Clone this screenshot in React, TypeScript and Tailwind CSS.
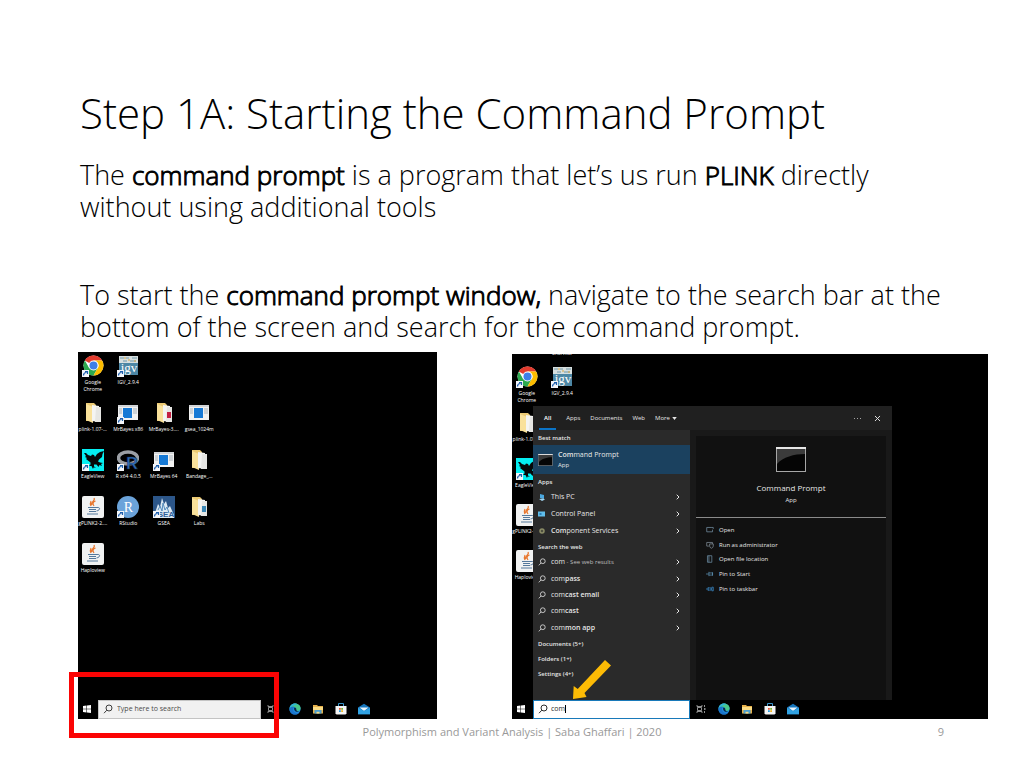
import { ReactNode } from "react";
import { ChevronRight, X } from "lucide-react";

/* ---------- desktop icons ---------- */

function Shortcut() {
  return (
    <g>
      <rect x="0" y="15" width="7" height="7" fill="#f4f6fa" />
      <path d="M1.5 20.5c0-2.500 1-3 3-3M3 16.500h2.500v2.500" stroke="#1d5fae" strokeWidth="1.2" fill="none" />
    </g>
  );
}

function Icon({ children, shortcut }: { children: ReactNode; shortcut?: boolean }) {
  return (
    <svg viewBox="0 0 22 22" className="size-[22px] shrink-0" aria-hidden="true">
      {children}
      {shortcut && <Shortcut />}
    </svg>
  );
}

function ChromeIcon() {
  return (
    <Icon shortcut>
      <circle cx="11.5" cy="10.5" r="10" fill="#fff" />
      <path d="M11.5 10.5 2.84 5.5A10 10 0 0 1 20.16 5.5H11.5z" fill="#e33b2e" />
      <path d="M2.84 5.5A10 10 0 0 0 11.5 20.5l4.33-7.5-8.66 0z" fill="#2da94f" />
      <path d="M20.16 5.5A10 10 0 0 1 11.5 20.5l4.33-7.5a5 5 0 0 0-4.33-7.5z" fill="#fdbd00" />
      <circle cx="11.5" cy="10.5" r="5" fill="#fff" />
      <circle cx="11.5" cy="10.5" r="4" fill="#3f7fe8" />
    </Icon>
  );
}

function IgvIcon() {
  return (
    <Icon shortcut>
      <rect x="2" y="1" width="19" height="19" fill="#4d87a5" />
      <rect x="2" y="1" width="19" height="7" fill="#d7dfdf" />
      <path d="M3 3h4M9 3h3M15 3h5M6 6h4M13 6h6" stroke="#7197a8" strokeWidth="1" />
      <path d="M7 3h2M17 6h2M11 5h2" stroke="#d9a540" strokeWidth="1" />
      <text x="12" y="17" textAnchor="middle" fontSize="13" fontFamily="Liberation Serif, serif" fill="#fff">igv</text>
    </Icon>
  );
}

function FolderIcon({ accent }: { accent?: string }) {
  return (
    <Icon>
      <path d="M4 1h8l2 2v16H4z" fill="#ecca74" />
      <path d="M4 2l7 3v16l-7-3z" fill="#f9e19b" />
      <path d="M10 3l7 1v16l-7-1z" fill="#f4f4f2" />
      <path d="M14 5h5v15h-6z" fill="#e6e6e3" />
      {accent && <rect x="14" y="10" width="4" height="6" fill={accent} />}
    </Icon>
  );
}

function WindowIcon({ shortcut }: { shortcut?: boolean }) {
  return (
    <Icon shortcut={shortcut}>
      <rect x="1" y="3" width="20" height="15" fill="#f2f2f2" />
      <path d="M1 3h20v2H1z" fill="#d2d5d8" />
      <rect x="6" y="6" width="9" height="10" fill="#1679d5" />
      <path d="M2 7h3M2 9h3M2 11h3M16 7h4M16 9h4M16 11h4" stroke="#a9b3bb" strokeWidth="1" />
    </Icon>
  );
}

function EagleIcon() {
  return (
    <Icon shortcut>
      <rect x="0" y="0" width="22" height="22" fill="#05eef2" />
      <path
        d="M2 4l2 0 2 2 3 1 1-1.500 2 .5 1 2 2-3 3-2 4-1-1.500 3-.5 3-3 2.500-1 2 2 1 3 .5-2 1 1 2-2.500-1-1 2-2-2.500-2.500 0 0 2 2 1-2.500 0-.5 1.500-1.500-3-2.500 0 1.500-1.500 0-2L4 10l1-1-2-1 1-1z"
        fill="#06090a"
      />
    </Icon>
  );
}

function RIcon() {
  return (
    <Icon shortcut>
      <ellipse cx="11" cy="9" rx="9.5" ry="6" fill="none" stroke="#9b9fa5" strokeWidth="3.5" />
      <text x="15" y="20" textAnchor="middle" fontSize="16" fontWeight="700" fontFamily="Liberation Sans, sans-serif" fill="#2f6db8" stroke="#14294a" strokeWidth="0.5">R</text>
    </Icon>
  );
}

function RStudioIcon() {
  return (
    <Icon shortcut>
      <circle cx="11" cy="11" r="11" fill="#6ba3da" />
      <text x="11.5" y="15.5" textAnchor="middle" fontSize="14" fontFamily="Liberation Serif, serif" fill="#fff">R</text>
    </Icon>
  );
}

function GseaIcon() {
  return (
    <Icon shortcut>
      <rect width="22" height="22" fill="#2c5689" />
      <path d="M2 17 5 8l2 3 2-9 2 6 2-3 2 7 2-2 4 9v3H2z" fill="#dce9f3" />
      <path d="M5 14l2-4 2 5 1-8 2 7 2-3 2 6" stroke="#5289bb" strokeWidth="1" fill="none" />
      <text x="13" y="21" textAnchor="middle" fontSize="8" fontWeight="700" fontFamily="Liberation Sans, sans-serif" fill="#2f5f9a">SEA</text>
    </Icon>
  );
}

function JavaIcon() {
  return (
    <Icon>
      <rect x="0" y="0" width="22" height="22" rx="2" fill="#f1f2f2" />
      <path d="M12 2c2 3-4 4-2 7M13.5 5c-3 1-3 3-1.5 5M9 5c-1 2-1 3 0 5" stroke="#e8772e" strokeWidth="1.2" fill="none" />
      <path d="M6 11.5h9M7 13.5h7M7 15.5h7M5 18h11" stroke="#54789b" strokeWidth="1" />
      <path d="M15 11.5c4-.5 3 3-.5 3.5" stroke="#54789b" strokeWidth="1" fill="none" />
    </Icon>
  );
}

type DesktopItem = { label: string; icon: ReactNode } | null;

const desktopItems: DesktopItem[] = [
  { label: "Google Chrome", icon: <ChromeIcon /> },
  { label: "IGV_2.9.4", icon: <IgvIcon /> },
  null,
  null,
  { label: "plink-1.07-...", icon: <FolderIcon /> },
  { label: "MrBayes x86", icon: <WindowIcon shortcut /> },
  { label: "MrBayes-3....", icon: <FolderIcon accent="#c31f42" /> },
  { label: "gsea_1024m", icon: <WindowIcon /> },
  { label: "EagleView", icon: <EagleIcon /> },
  { label: "R x64 4.0.5", icon: <RIcon /> },
  { label: "MrBayes 64", icon: <WindowIcon shortcut /> },
  { label: "Bandage_...", icon: <FolderIcon /> },
  { label: "gPLINK2-2....", icon: <JavaIcon /> },
  { label: "RStudio", icon: <RStudioIcon /> },
  { label: "GSEA", icon: <GseaIcon /> },
  { label: "Labs", icon: <FolderIcon accent="#3b87b5" /> },
  { label: "Haploview", icon: <JavaIcon /> },
];

function DesktopIcon({ label, icon }: { label: string; icon: ReactNode }) {
  const twoLines = label === "Google Chrome";
  return (
    <button className="flex flex-col items-center justify-start gap-0.5 text-[5px] leading-[7px] text-white">
      {icon}
      <span className={twoLines ? "w-6 text-center" : "whitespace-nowrap"}>{label}</span>
    </button>
  );
}

/* ---------- taskbar ---------- */

function SearchGlyph({ className }: { className: string }) {
  return (
    <svg viewBox="0 0 10 10" className={className} fill="none" stroke="currentColor" aria-hidden="true">
      <circle cx="6" cy="4" r="3" />
      <path d="M3.8 6.2 1 9.2" />
    </svg>
  );
}

function Taskbar({ children }: { children: ReactNode }) {
  return (
    <div className="flex h-5 items-center bg-black">
      <button aria-label="Start" className="flex w-[18px] shrink-0 justify-center">
        <svg viewBox="0 0 8 8" className="size-2" fill="#fff">
          <path d="M0 1.1 3.5.6v3.1H0zM4 .5 8 0v3.7H4zM0 4.2h3.5v3.2L0 6.9zM4 4.2h4V8l-4-.6z" />
        </svg>
      </button>
      {children}
      <div className="flex items-center gap-[11px] pl-[5px]">
        <button aria-label="Task view">
          <svg viewBox="0 0 12 12" className="size-3" fill="none" stroke="#b5b5b5">
            <path d="M2 2v1.5h5V2M2 10V8.5h5V10M2.5 4.500h4v3h-4zM9.5 2v2M9.5 8v2" strokeWidth="0.8" />
            <path d="M9 6h1.5" strokeWidth="1.5" />
          </svg>
        </button>
        <button aria-label="Microsoft Edge">
          <svg viewBox="0 0 12 12" className="size-3">
            <circle cx="6" cy="6" r="5.6" fill="#1f8fe0" />
            <path d="M.5 5.5C1 2 3.5.4 6 .4c3.5 0 5.700 2.500 5.6 5C11.5 7.5 9.5 8 8 7.7c-1.2-.2-.5-.9-.7-1.8C7 4.5 5.5 3.7 4 3.8 2.300 3.900 1 4.700.5 5.5z" fill="#49c88a" />
            <path d="M.5 5.500C1 2 3.500.4 6 .4c1 0 2 .3 2.800.8C6 1.500 3 2.500.5 5.500z" fill="#2fb3d8" />
            <path d="M.5 5.5C1.500 3.500 4 3.300 5.5 4 4 4.500 3.700 6 4.300 7.500 5 9.500 7.500 10.300 10.300 9.500 9 11.200 7.500 11.600 6 11.600 3 11.600.3 9.300.5 5.500z" fill="#1a74cc" />
            <path d="M5.500 4.500c-.8.8-.5 2.500.8 3.700 1 .7 2.500.9 3.800.3-1.500-.2-2.700-.9-2.800-1.800.3-1-.5-2-1.800-2.200z" fill="#0b2844" />
          </svg>
        </button>
        <button aria-label="File Explorer">
          <svg viewBox="0 0 12 12" className="size-3">
            <path d="M1 2h4l1 1h5v7.500H1z" fill="#e6b04a" />
            <path d="M1 4h10v3H1z" fill="#fbdc85" />
            <path d="M2.500 7h7v3.500h-7z" fill="#4d9fd0" />
            <path d="M4.500 8.800h3v1.700h-3z" fill="#fbdc85" />
          </svg>
        </button>
        <button aria-label="Microsoft Store">
          <svg viewBox="0 0 12 12" className="size-3">
            <path d="M3.500 3.500v-3h5v3" fill="none" stroke="#3792c8" />
            <path d="M.5 3h11v7.500l-1 1h-9l-1-1z" fill="#f5f5f5" />
            <path d="M4 5h1.800v1.800H4z" fill="#e35336" />
            <path d="M6.200 5H8v1.800H6.200z" fill="#7fb432" />
            <path d="M4 7.200h1.800V9H4z" fill="#2699dc" />
            <path d="M6.200 7.200H8V9H6.200z" fill="#f3b41b" />
          </svg>
        </button>
        <button aria-label="Mail">
          <svg viewBox="0 0 12 12" className="size-3">
            <path d="M0 4.500 6 .8l6 3.700v6.700H0z" fill="#1676bd" />
            <path d="M1.500 4.500h9L6 8z" fill="#eaf5fc" />
            <path d="M0 4.700 6 8l6-3.300v6.500H0z" fill="#31a2e3" />
          </svg>
        </button>
      </div>
    </div>
  );
}

/* ---------- start menu search ---------- */

const apps = [
  { bold: "", rest: "This PC", color: "#4aa7df" },
  { bold: "", rest: "Control Panel", color: "#60bde9" },
  { bold: "Com", rest: "ponent Services", color: "#8b8c66" },
];

const suggestions = ["", "pass", "cast email", "cast", "mon app"];

const actions = [
  { label: "Open", path: "M7 2H1v6h8V5M7 2h3v2", color: "#7794a8" },
  { label: "Run as administrator", path: "M4 7H1V2h8v2M5 4h5v3q0 2-2.5 3Q5 9 5 7z", color: "#83909a" },
  { label: "Open file location", path: "M2 1h6v9H2zM4 1v9", color: "#6f92aa" },
  { label: "Pin to Start", path: "M0 5.5h4M4 2.500v6M4 4h5v3H4M9 3v5", color: "#5d8fb0" },
  { label: "Pin to taskbar", path: "M0 5.5h3M3 3v5M3 4h4v3H3M8 3h2v5H8z", color: "#3c8fd0" },
];

function ConsoleIcon({ className }: { className: string }) {
  return (
    <svg viewBox="0 0 30 25" className={className} aria-hidden="true">
      <rect x="0.5" y="0.5" width="29" height="24" fill="#050505" stroke="#a7a7a7" />
      <path d="M1 2h28v5C18 7 7 10 1 17z" fill="#3b3b3b" />
      <path d="M0 1h30" stroke="#e6e6e6" strokeWidth="2" />
    </svg>
  );
}

function AppGlyph({ index, color }: { index: number; color: string }) {
  return (
    <svg viewBox="0 0 8 8" className="size-2 shrink-0" aria-hidden="true">
      {index === 0 && (
        <>
          <path d="M2 1l4 1v4L2 5z" fill={color} />
          <path d="M1 6l4-.5 2 1L4 8z" fill="#9fd3f0" />
        </>
      )}
      {index === 1 && (
        <>
          <path d="M0 1.500h7v5H0z" fill={color} />
          <path d="M1.500 3h2v2h-2z" fill="#2b7fb8" />
        </>
      )}
      {index === 2 && <circle cx="4" cy="4" r="2" fill="#4e5040" stroke={color} strokeWidth="1.5" />}
    </svg>
  );
}

function Heading({ children }: { children: ReactNode }) {
  return <h3 className="flex h-[15px] items-center pl-[5px] text-[6px] font-semibold">{children}</h3>;
}

function SearchMenu() {
  return (
    <div className="absolute top-[52px] bottom-[19px] left-[21px] flex w-[359px] flex-col bg-[#191919] text-[7px] leading-[10px] text-[#e6e6e6]">
      <div className="flex h-6 shrink-0 items-stretch bg-[#202020] text-[6px]">
        <div className="flex gap-2.5 pl-1.5">
          <button className="border-b-2 border-[#0b74c7] px-[5px] pt-0.5 font-semibold text-white">All</button>
          <button>Apps</button>
          <button>Documents</button>
          <button>Web</button>
          <button className="flex items-center gap-0.5">
            More
            <svg viewBox="0 0 6 4" className="h-[3px] w-[5px]" fill="currentColor"><path d="M0 0h6L3 4z" /></svg>
          </button>
        </div>
        <div className="ml-auto flex items-center gap-3 pr-2.5">
          <button aria-label="More options" className="flex gap-[2px]">
            <i className="size-px bg-[#a5a5a5]" />
            <i className="size-px bg-[#a5a5a5]" />
            <i className="size-px bg-[#a5a5a5]" />
          </button>
          <button aria-label="Close"><X size={9} strokeWidth={2.5} /></button>
        </div>
      </div>

      <div className="flex min-h-0 flex-1">
        {/* results */}
        <div className="w-[157px] shrink-0 bg-[#2a2a2a]">
          <Heading>Best match</Heading>
          <button className="flex h-[29px] w-full items-center gap-[5px] bg-[#1b415f] pl-[5px] text-left">
            <ConsoleIcon className="h-3 w-[15px]" />
            <span>
              <span className="block"><b className="font-semibold">Com</b>mand Prompt</span>
              <span className="block text-[6px]">App</span>
            </span>
          </button>
          <Heading>Apps</Heading>
          <div className="grid h-[50px] grid-rows-3">
            {apps.map((a, i) => (
              <button key={a.rest} className="flex items-center gap-[5px] pr-2 pl-[5px]">
                <AppGlyph index={i} color={a.color} />
                <span><b className="font-semibold">{a.bold}</b>{a.rest}</span>
                <ChevronRight size={8} strokeWidth={3} className="ml-auto" />
              </button>
            ))}
          </div>
          <Heading>Search the web</Heading>
          <div className="grid h-[82px] grid-rows-5">
            {suggestions.map((s) => (
              <button key={s} className="flex items-center gap-[5px] pr-2 pl-[5px]">
                <SearchGlyph className="size-2 shrink-0" />
                <span>
                  com<b className="font-semibold">{s}</b>
                  {s === "" && <span className="text-[6px] text-[#bdbdbd]"> - See web results</span>}
                </span>
                <ChevronRight size={8} strokeWidth={3} className="ml-auto" />
              </button>
            ))}
          </div>
          <Heading>Documents (5+)</Heading>
          <Heading>Folders (1+)</Heading>
          <Heading>Settings (4+)</Heading>
        </div>

        {/* preview */}
        <div className="mx-1.5 mt-1.5 flex-1 bg-[#111]">
          <div className="flex h-[82px] flex-col items-center border-b border-[#8b8b8b] pt-[11px]">
            <ConsoleIcon className="h-[25px] w-[30px]" />
            <h2 className="mt-[11px] text-[8px]">Command Prompt</h2>
            <p className="mt-[2px] text-[6px]">App</p>
          </div>
          <div className="mt-[5px] grid h-[73px] grid-rows-5 text-[6px]">
            {actions.map((a) => (
              <button key={a.label} className="flex items-center gap-[5px] pl-2.5">
                <svg viewBox="0 0 11 11" className="size-2 shrink-0" fill="none" stroke={a.color}><path d={a.path} /></svg>
                {a.label}
              </button>
            ))}
          </div>
        </div>
      </div>
    </div>
  );
}

// the bold runs are the light face with a heavier outline
const strong = "text-[26px] font-light [-webkit-text-stroke:1px_black]";

export default function App() {
  return (
    <main className="min-h-screen overflow-hidden bg-white font-['Open_Sans','Noto_Sans',sans-serif] font-light text-black">
      <header className="pt-[85px] pl-20">
        <h1 className="text-[42px] leading-[56px] whitespace-nowrap">Step 1A: Starting the Command Prompt</h1>
      </header>

      <section className="pt-[18px] pl-20 text-[27px] leading-8 whitespace-nowrap">
        <p>
          The <strong className={strong}>command prompt</strong> is a program that let’s us run{" "}
          <strong className={strong}>PLINK</strong> directly
          <br />
          without using additional tools
        </p>
        <p className="mt-14">
          To start the <strong className={strong}>command prompt window,</strong> navigate to the search bar at the
          <br />
          bottom of the screen and search for the command prompt.
        </p>
      </section>

      <section className="mt-[9px] flex items-end gap-[75px] pr-9 pl-[78px] font-normal">
        <div className="relative flex h-[367px] flex-[359] flex-col bg-black">
          <div className="min-h-0 flex-1 overflow-hidden pt-[3px]">
            <div className="-ml-[3px] grid w-[142px] auto-rows-[47px] grid-cols-4">
              {desktopItems.map((item, i) =>
                item ? <DesktopIcon key={item.label} {...item} /> : <span key={i} />
              )}
            </div>
          </div>
          <Taskbar>
            <label className="ml-[2px] flex h-[19px] w-[163px] items-center gap-1 border border-[#c4c4c4] bg-[#f1f1f1] pl-1 text-[#3d3d3d]">
              <SearchGlyph className="size-2.5 shrink-0" />
              <input
                aria-label="Windows search"
                placeholder="Type here to search"
                className="w-full bg-transparent text-[7px] outline-none placeholder:text-[#4b4b4b]"
              />
            </label>
          </Taskbar>
          <div className="absolute -bottom-[19px] -left-[9px] h-[66px] w-[210px] border-[5px] border-[#fb0404]" />
        </div>

        <div className="relative flex h-[365px] flex-[476] flex-col bg-black">
          <div className="relative min-h-0 flex-1 overflow-hidden">
            <span className="absolute -top-[3px] left-10 text-[5px] leading-[5px] text-white">Shortcut</span>
            <div className="-ml-[3px] grid w-[142px] auto-rows-[46px] grid-cols-4 pt-3">
              {/* the open menu hides the other columns below the first row */}
              {desktopItems.map((item, i) =>
                item && (i % 4 === 0 || i < 4) ? <DesktopIcon key={item.label} {...item} /> : <span key={i} />
              )}
            </div>
          </div>
          <Taskbar>
            <label className="ml-[3px] flex h-[19px] w-[157px] items-center gap-[3px] border border-[#1879b9] bg-white pl-1 text-[#2c2c2c]">
              <SearchGlyph className="size-2.5 shrink-0" />
              <input aria-label="Windows search" defaultValue="com" className="w-3.5 bg-transparent text-[7px] outline-none" />
              <i className="-ml-[3px] h-2 w-px bg-black" />
            </label>
          </Taskbar>
          <SearchMenu />
          <svg viewBox="0 0 38 39" className="absolute bottom-5 left-[61px] h-[39px] w-[38px]" aria-hidden="true">
            <path d="M32 0l6 5.5L11.5 33l2 4L0 39 .7 26l4 3z" fill="#fdbb05" />
          </svg>
        </div>
      </section>

      <footer className="grid grid-cols-[1fr_auto_1fr] px-20 pt-1 text-[11px] leading-[18px] font-normal text-[#999]">
        <p className="col-start-2">Polymorphism and Variant Analysis | Saba Ghaffari | 2020</p>
        <p className="text-right">9</p>
      </footer>
    </main>
  );
}
